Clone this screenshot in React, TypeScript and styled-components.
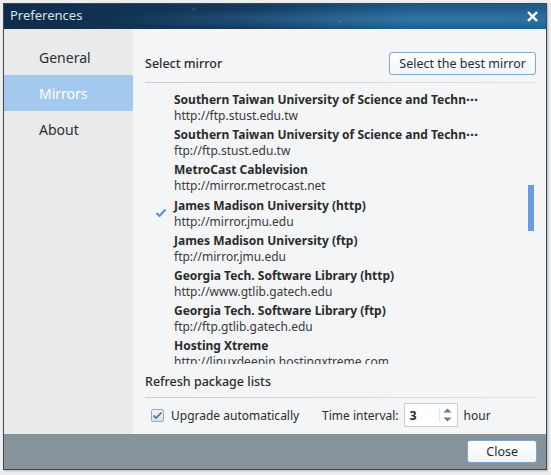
import styled, { createGlobalStyle } from "styled-components";

const GlobalStyle = createGlobalStyle`
  html, body {
    margin: 0;
    padding: 0;
    background: #eeeeee;
  }
  body {
    font-family: "Noto Sans", "DejaVu Sans", sans-serif;
    color: #2b2b2b;
  }
`;

const mirrors = [
  { name: "Southern Taiwan University of Science and Techn⋯", url: "http://ftp.stust.edu.tw" },
  { name: "Southern Taiwan University of Science and Techn⋯", url: "ftp://ftp.stust.edu.tw" },
  { name: "MetroCast Cablevision", url: "http://mirror.metrocast.net" },
  { name: "James Madison University (http)", url: "http://mirror.jmu.edu", selected: true },
  { name: "James Madison University (ftp)", url: "ftp://mirror.jmu.edu" },
  { name: "Georgia Tech. Software Library (http)", url: "http://www.gtlib.gatech.edu" },
  { name: "Georgia Tech. Software Library (ftp)", url: "ftp://ftp.gtlib.gatech.edu" },
  { name: "Hosting Xtreme", url: "http://linuxdeepin.hostingxtreme.com" },
];

const navItems = ["General", "Mirrors", "About"];

export default function App() {
  return (
    <>
      <GlobalStyle />
      <Screen>
        <Window>
          <TitleBar>
            <span>Preferences</span>
            <CloseX viewBox="0 0 12 12">
              <path d="M2 2 L10 10 M10 2 L2 10" />
            </CloseX>
          </TitleBar>
          <Body>
            <Sidebar>
              {navItems.map((item) => (
                <NavItem key={item} $active={item === "Mirrors"}>
                  {item}
                </NavItem>
              ))}
            </Sidebar>
            <Content>
              <SectionHead>
                <SectionTitle>Select mirror</SectionTitle>
                <Button $wide>Select the best mirror</Button>
              </SectionHead>
              <Divider />
              <ListWrap>
                <MirrorList>
                  {mirrors.map((m, i) => (
                    <MirrorRow key={i}>
                      <CheckCell>
                        {m.selected && (
                          <svg width="12" height="10" viewBox="0 0 12 10">
                            <path d="M1.5 5 L4.5 8 L10.5 1.5" fill="none" stroke="#5b8fd8" strokeWidth="2" />
                          </svg>
                        )}
                      </CheckCell>
                      <div>
                        <MirrorName>{m.name}</MirrorName>
                        <MirrorUrl>{m.url}</MirrorUrl>
                      </div>
                    </MirrorRow>
                  ))}
                </MirrorList>
                <ScrollThumb />
              </ListWrap>
              <SectionTitle>Refresh package lists</SectionTitle>
              <Divider $tight />
              <OptionsRow>
                <CheckLabel>
                  <CheckBox>
                    <svg width="11" height="9" viewBox="0 0 11 9">
                      <path d="M1.5 4.5 L4 7 L9.5 1.5" fill="none" stroke="#4a6d9c" strokeWidth="1.6" />
                    </svg>
                  </CheckBox>
                  Upgrade automatically
                </CheckLabel>
                <IntervalGroup>
                  Time interval:
                  <SpinBox>
                    <SpinValue>3</SpinValue>
                    <SpinArrows>
                      <svg width="9" height="5" viewBox="0 0 9 5">
                        <path d="M0.5 4.5 L4.5 0.5 L8.5 4.5 Z" fill="#6f7880" />
                      </svg>
                      <svg width="9" height="5" viewBox="0 0 9 5">
                        <path d="M0.5 0.5 L4.5 4.5 L8.5 0.5 Z" fill="#6f7880" />
                      </svg>
                    </SpinArrows>
                  </SpinBox>
                  hour
                </IntervalGroup>
              </OptionsRow>
            </Content>
          </Body>
          <Footer>
            <Button>Close</Button>
          </Footer>
        </Window>
      </Screen>
    </>
  );
}

const Screen = styled.div`
  width: 551px;
  height: 475px;
  padding: 3px 4px 5px 3px;
  box-sizing: border-box;
  background: #eeeeee;
`;

const Window = styled.div`
  height: 100%;
  display: flex;
  flex-direction: column;
  border: 1px solid #3d4a55;
  box-sizing: border-box;
  background: #f3f5f6;
  box-shadow: 1px 1px 2px rgba(0, 0, 0, 0.25);
`;

const TitleBar = styled.div`
  height: 25px;
  flex: none;
  box-sizing: border-box;
  display: flex;
  align-items: center;
  justify-content: space-between;
  padding: 0 8px 3px 6px;
  color: #d9e3ec;
  font-size: 13px;
  background:
    radial-gradient(circle at 35% 20%, rgba(255, 255, 255, 0.12) 0 1px, transparent 2px),
    radial-gradient(circle at 62% 70%, rgba(255, 255, 255, 0.1) 0 1px, transparent 2px),
    radial-gradient(ellipse at 80% 60%, rgba(70, 140, 190, 0.55), transparent 55%),
    linear-gradient(90deg, #0f2c4a 0%, #143a5e 45%, #1c5a86 75%, #1d5d8c 100%);
`;

const CloseX = styled.svg`
  width: 11px;
  height: 11px;
  margin-top: 2px;
  path {
    stroke: #ffffff;
    stroke-width: 2.6;
    stroke-linecap: square;
  }
`;

const Body = styled.div`
  flex: 1;
  display: flex;
  min-height: 0;
`;

const Sidebar = styled.div`
  width: 129px;
  flex: none;
  background: #e8eaec;
  padding-top: 10px;
`;

const NavItem = styled.div<{ $active?: boolean }>`
  height: 36px;
  display: flex;
  align-items: center;
  padding-left: 35px;
  font-size: 14px;
  color: ${(p) => (p.$active ? "#ffffff" : "#2e2e2e")};
  background: ${(p) => (p.$active ? "#a4c9ef" : "transparent")};
`;

const Content = styled.div`
  flex: 1;
  display: flex;
  flex-direction: column;
  padding: 23px 10px 0 12px;
  min-width: 0;
`;

const SectionHead = styled.div`
  display: flex;
  align-items: center;
  justify-content: space-between;
`;

const SectionTitle = styled.div`
  font-size: 12.5px;
  font-weight: 500;
  color: #2b2b2b;
  line-height: 22px;
`;

const Button = styled.button<{ $wide?: boolean }>`
  font-family: inherit;
  font-size: 12.5px;
  color: #2b2b2b;
  height: 23px;
  padding: 0 ${(p) => (p.$wide ? "9px" : "18px")};
  border: 1px solid #7fa7d4;
  border-radius: 3px;
  background: linear-gradient(#ffffff, #f1f5fa);
`;

const Divider = styled.div<{ $tight?: boolean }>`
  height: 1px;
  background: linear-gradient(90deg, #c9cdd1, #dfe2e5);
  margin: ${(p) => (p.$tight ? "4px 0 5px" : "7px 0 4px")};
`;

const ListWrap = styled.div`
  position: relative;
  height: 277px;
  overflow: hidden;
  margin-bottom: 7px;
  flex: none;
`;

const MirrorList = styled.div`
  display: flex;
  flex-direction: column;
  padding-top: 5px;
`;

const MirrorRow = styled.div`
  display: flex;
  height: 35.2px;
`;

const CheckCell = styled.div`
  width: 29px;
  flex: none;
  display: flex;
  justify-content: center;
  padding-top: 10px;
  box-sizing: border-box;
  padding-left: 2px;
`;

const MirrorName = styled.div`
  font-size: 12px;
  font-weight: 700;
  color: #2b2b2b;
  line-height: 16px;
  white-space: nowrap;
`;

const MirrorUrl = styled.div`
  font-size: 12px;
  color: #3a3a3a;
  line-height: 15px;
  white-space: nowrap;
`;

const ScrollThumb = styled.div`
  position: absolute;
  right: 2px;
  top: 98px;
  width: 6px;
  height: 46px;
  background: #6a9be0;
`;

const OptionsRow = styled.div`
  display: flex;
  align-items: center;
  height: 24px;
  padding-left: 6px;
  font-size: 12px;
  color: #2b2b2b;
`;

const CheckLabel = styled.label`
  display: flex;
  align-items: center;
  gap: 7px;
  width: 171px;
`;

const CheckBox = styled.span`
  width: 13px;
  height: 13px;
  box-sizing: border-box;
  border: 1px solid #9aa7b4;
  border-radius: 2px;
  background: linear-gradient(#eef3f9, #d8e2ee);
  display: flex;
  align-items: center;
  justify-content: center;
`;

const IntervalGroup = styled.div`
  display: flex;
  align-items: center;
  gap: 5px;
`;

const SpinBox = styled.div`
  width: 54px;
  height: 24px;
  box-sizing: border-box;
  border: 1px solid #c8ced4;
  background: #ffffff;
  display: flex;
  align-items: center;
  justify-content: space-between;
  padding: 0 2px 0 5px;
  margin-right: 1px;
`;

const SpinValue = styled.span`
  font-weight: 700;
  font-size: 12.5px;
`;

const SpinArrows = styled.div`
  display: flex;
  flex-direction: column;
  gap: 4px;
  border-left: 1px solid #e0e4e8;
  padding: 0 3px;
`;

const Footer = styled.div`
  height: 35px;
  flex: none;
  background: #87939b;
  display: flex;
  align-items: center;
  justify-content: flex-end;
  padding-right: 9px;
`;
